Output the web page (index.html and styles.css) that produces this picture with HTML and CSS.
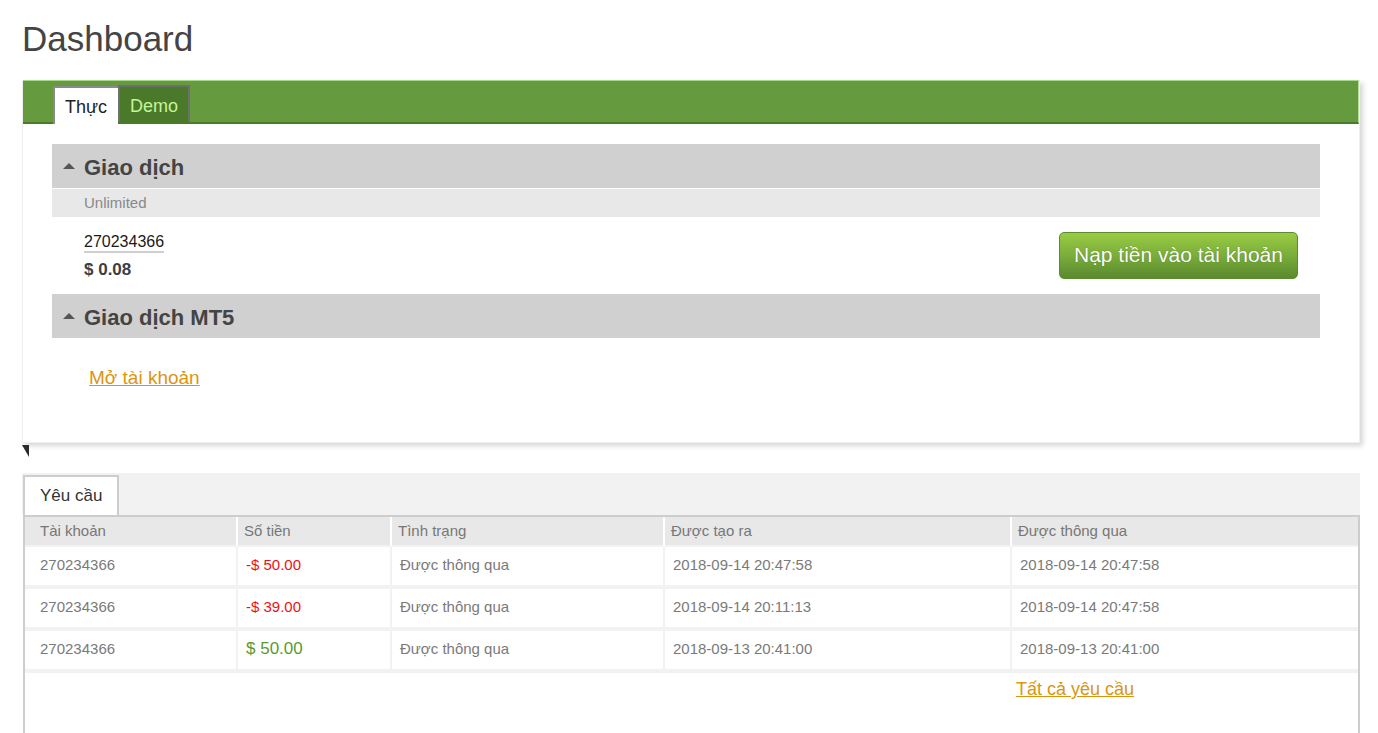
FILE: index.html
```html
<!DOCTYPE html>
<html lang="vi">
<head>
    <meta charset="UTF-8">
    <title>Dashboard</title>
    <link rel="stylesheet" href="styles.css">
</head>
<body>
    <div class="page">
        <h1 class="page-title">Dashboard</h1>

        <div class="account-panel">
            <div class="tab-bar">
                <div class="tab tab-active">Thực</div>
                <div class="tab tab-demo">Demo</div>
            </div>

            <div class="panel-body">
                <div class="section-head"><span class="caret"></span>Giao dịch</div>
                <div class="section-sub">Unlimited</div>
                <div class="account-row">
                    <div class="account-info">
                        <span class="account-number">270234366</span>
                        <span class="account-balance">$ 0.08</span>
                    </div>
                    <a class="deposit-btn" href="#">Nạp tiền vào tài khoản</a>
                </div>

                <div class="section-head"><span class="caret"></span>Giao dịch MT5</div>
                <div class="open-account">
                    <a class="link" href="#">Mở tài khoản</a>
                </div>
            </div>
        </div>

        <div class="corner-mark"></div>

        <div class="requests">
            <div class="req-tabs">
                <div class="req-tab">Yêu cầu</div>
            </div>
            <div class="req-box">
                <table class="req-table">
                    <colgroup>
                        <col style="width:213px">
                        <col style="width:154px">
                        <col style="width:273px">
                        <col style="width:347px">
                        <col>
                    </colgroup>
                    <thead>
                        <tr>
                            <th class="first">Tài khoản</th>
                            <th>Số tiền</th>
                            <th>Tình trạng</th>
                            <th>Được tạo ra</th>
                            <th>Được thông qua</th>
                        </tr>
                    </thead>
                    <tbody>
                        <tr>
                            <td class="first">270234366</td>
                            <td class="neg">-$ 50.00</td>
                            <td>Được thông qua</td>
                            <td>2018-09-14 20:47:58</td>
                            <td>2018-09-14 20:47:58</td>
                        </tr>
                        <tr>
                            <td class="first">270234366</td>
                            <td class="neg">-$ 39.00</td>
                            <td>Được thông qua</td>
                            <td>2018-09-14 20:11:13</td>
                            <td>2018-09-14 20:47:58</td>
                        </tr>
                        <tr>
                            <td class="first">270234366</td>
                            <td class="pos">$ 50.00</td>
                            <td>Được thông qua</td>
                            <td>2018-09-13 20:41:00</td>
                            <td>2018-09-13 20:41:00</td>
                        </tr>
                    </tbody>
                </table>
                <div class="req-footer">
                    <a class="link link-small" href="#">Tất cả yêu cầu</a>
                </div>
            </div>
        </div>
    </div>
</body>
</html>
```

FILE: styles.css
```css
* {
    box-sizing: border-box;
}

body {
    margin: 0;
    background-color: #ffffff;
    font-family: "Liberation Sans", Arial, sans-serif;
    color: #333;
}

.page {
    padding: 18px 18px 0 22px;
}

.page-title {
    font-size: 35px;
    font-weight: normal;
    line-height: 42px;
    color: #444;
    margin: 0 0 20px 0;
}

/* account panel */

.account-panel {
    background-color: #fff;
    border: 1px solid #efefef;
    border-top: none;
    box-shadow: 3px 3px 5px rgba(0, 0, 0, 0.16);
}

.tab-bar {
    display: flex;
    align-items: flex-end;
    height: 44px;
    padding-left: 30px;
    background-color: #659a3f;
    border-top: 1px solid #a8d98a;
    border-bottom: 2px solid #4b7b29;
    border-right: 1px solid #b5dc9b;
}

.tab {
    height: 38px;
    margin-bottom: -2px;
    font-size: 18px;
    line-height: 38px;
}

.tab-active {
    width: 65px;
    padding-left: 10px;
    background-color: #fff;
    color: #222;
    border-left: 2px solid #8a8a8a;
    border-top: 2px solid #8a8a8a;
}

.tab-demo {
    width: 72px;
    height: 37px;
    margin-bottom: 0;
    padding-left: 10px;
    background-color: #4a7a29;
    color: #c4f59a;
    border: 2px solid #6e6e6e;
    border-bottom: none;
    line-height: 38px;
}

.panel-body {
    padding: 20px 39px 0 29px;
}

.section-head {
    display: flex;
    align-items: center;
    height: 44px;
    padding: 3px 0 0 11px;
    background-color: #d0d0d0;
    font-size: 22px;
    font-weight: bold;
    color: #444;
}

.caret {
    width: 0;
    height: 0;
    margin-right: 9px;
    margin-top: -4px;
    border-left: 6px solid transparent;
    border-right: 6px solid transparent;
    border-bottom: 6px solid #555;
}

.section-sub {
    height: 29px;
    margin-top: 1px;
    padding-left: 32px;
    background-color: #e8e8e8;
    border-bottom: 1px solid #fff;
    font-size: 15px;
    line-height: 28px;
    color: #888;
}

.account-row {
    display: flex;
    justify-content: space-between;
    align-items: center;
    height: 76px;
    padding: 0 22px 0 32px;
}

.account-info {
    display: flex;
    flex-direction: column;
    align-items: flex-start;
    margin-top: 1px;
}

.account-number {
    font-size: 16px;
    line-height: 17px;
    color: #1a1a1a;
    border-bottom: 2px solid #cfcfcf;
    padding-bottom: 1px;
}

.account-balance {
    margin-top: 7px;
    font-size: 17px;
    font-weight: bold;
    color: #3a3f44;
}

.deposit-btn {
    display: block;
    height: 47px;
    width: 239px;
    margin-top: -2px;
    border: 1px solid #5d8c30;
    border-radius: 5px;
    background: linear-gradient(to bottom, #9acb44 0%, #7aad3a 50%, #5a8a2e 100%);
    color: #fff;
    font-size: 21px;
    line-height: 44px;
    text-align: center;
    text-decoration: none;
    text-shadow: 0 0 1px rgba(40, 70, 20, 0.6);
}

.open-account {
    height: 104px;
    padding: 29px 37px 0;
}

.link {
    font-size: 19px;
    line-height: 22px;
    color: #dc950f;
    text-decoration: underline;
}

.link-small {
    font-size: 18px;
}

.corner-mark {
    width: 0;
    height: 0;
    margin-top: 2px;
    border-top: 12px solid #2a2a2a;
    border-left: 7px solid transparent;
}

/* requests */

.requests {
    margin-top: 16px;
}

.req-tabs {
    display: flex;
    align-items: flex-end;
    height: 42px;
    padding-left: 1px;
    background-color: #f2f2f2;
}

.req-tab {
    width: 96px;
    height: 40px;
    padding-left: 15px;
    background-color: #fff;
    border: 2px solid #cdcdcd;
    border-bottom: none;
    font-size: 17px;
    line-height: 38px;
    color: #333;
}

.req-box {
    height: 220px;
    margin-left: 1px;
    border: 2px solid #cdcdcd;
    border-bottom: none;
}

.req-table {
    width: 100%;
    border-collapse: separate;
    border-spacing: 0;
    table-layout: fixed;
    font-size: 15px;
    color: #777;
}

.req-table th {
    height: 30px;
    padding: 0 6px 2px;
    background-color: #e8e8e8;
    border-right: 2px solid #fff;
    border-bottom: 2px solid #f2f2f2;
    font-weight: normal;
    text-align: left;
}

.req-table td {
    height: 42px;
    padding: 0 8px 3px;
    background-color: #fff;
    border-right: 2px solid #f2f2f2;
    border-bottom: 4px solid #f2f2f2;
    color: #7a7a7a;
}

.req-table th:last-child,
.req-table td:last-child {
    border-right: none;
}

.req-table .first {
    padding-left: 15px;
}

.req-table td.neg {
    color: #ee1111;
}

.req-table td.pos {
    color: #5b9a2f;
    font-size: 17px;
}

.req-footer {
    padding: 5px 224px 0 0;
    text-align: right;
}
```
